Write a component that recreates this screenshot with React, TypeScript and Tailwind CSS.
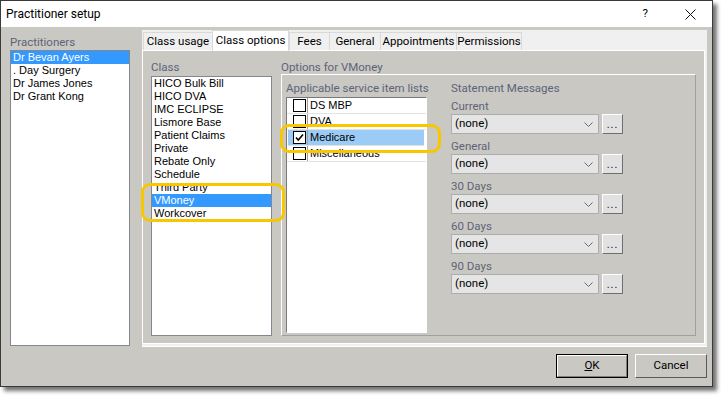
import React from 'react';

const practitioners = ['Dr Bevan Ayers', '. Day Surgery', 'Dr James Jones', 'Dr Grant Kong'];
const classes = [
  'HICO Bulk Bill', 'HICO DVA', 'IMC ECLIPSE', 'Lismore Base', 'Patient Claims', 'Private',
  'Rebate Only', 'Schedule', 'Third Party', 'VMoney', 'Workcover',
];
const serviceLists = [
  { name: 'DS MBP', checked: false },
  { name: 'DVA', checked: false },
  { name: 'Medicare', checked: true },
  { name: 'Miscellaneous', checked: false },
];
const messages = ['Current', 'General', '30 Days', '60 Days', '90 Days'];
const tabs = [
  { name: 'Class usage', w: 'w-[69px]' },
  { name: 'Class options', w: 'w-[77px]' },
  { name: 'Fees', w: 'w-[40px]' },
  { name: 'General', w: 'w-[51px]' },
  { name: 'Appointments', w: 'w-[76px]' },
  { name: 'Permissions', w: 'w-[66px]' },
];

const ui = "font-['Roboto',sans-serif] text-[11.5px] whitespace-nowrap";
const list = "font-['Liberation_Sans',Arial,sans-serif] text-[11px] leading-[13px] whitespace-nowrap";
const label = "font-['Roboto',sans-serif] text-[11.5px] text-[#5e6378] whitespace-nowrap";

function Combo() {
  return (
    <div className="flex">
      <div className="w-[148px] h-[20px] border border-[#adadad] bg-[#e5e5e5] flex items-center pl-[3px] pr-[4px]">
        <span className={`${ui} text-black flex-1`}>(none)</span>
        <svg width="9" height="5" viewBox="0 0 9 5" className="mr-[1px]">
          <polyline points="0.5,0.5 4.5,4.5 8.5,0.5" fill="none" stroke="#6a6a6a" strokeWidth="1" />
        </svg>
      </div>
      <div className="ml-[3px] w-[21px] h-[20px] bg-[#e1e1e1] border-t border-l border-white border-b border-r border-b-[#6f6f6f] border-r-[#6f6f6f] flex items-end justify-center pb-[4px]">
        <span className="font-['Liberation_Sans',sans-serif] text-[10px] leading-[8px] text-black tracking-[1px]">...</span>
      </div>
    </div>
  );
}

export default function App() {
  return (
    <div className="w-[721px] h-[395px] bg-white">
      <div className="relative w-[713px] h-[387px] border border-[#3a3a3a] bg-[#c9c8c3] shadow-[4px_4px_4px_rgba(0,0,0,0.55)] flex flex-col">
        {/* title bar */}
        <div className="h-[26px] bg-white flex items-center pl-[5px] shrink-0">
          <span className={`${ui} text-[12px] text-black flex-1`}>Practitioner setup</span>
          <span className={`${ui} text-black mr-[37px]`}>?</span>
          <svg width="11" height="11" viewBox="0 0 11 11" className="mr-[16px]">
            <line x1="0.5" y1="0.5" x2="10.5" y2="10.5" stroke="#111" strokeWidth="1" />
            <line x1="10.5" y1="0.5" x2="0.5" y2="10.5" stroke="#111" strokeWidth="1" />
          </svg>
        </div>

        <div className="flex">
          {/* practitioners */}
          <div className="ml-[9px] w-[120px] pt-[7px]">
            <div className={`${label} h-[16px] leading-[17px]`}>Practitioners</div>
            <div className="h-[296px] border border-[#828790] bg-white">
              {practitioners.map((p, i) => (
                <div
                  key={p}
                  className={`${list} h-[13px] pl-[2px] ${i === 0 ? 'bg-[#3399ff] text-white' : 'text-black'}`}
                >
                  {p}
                </div>
              ))}
            </div>
          </div>

          {/* tab control */}
          <div className="ml-[12px] mt-[3px] w-[565px] bg-[#f0f0f0] pr-[2px] pb-[2px] border-b border-white">
            <div className="flex h-[20px] items-end pl-[1px]">
              {tabs.map((t, i) =>
                i === 1 ? (
                  <div
                    key={t.name}
                    className={`${t.w} relative z-10 h-[21px] -mb-px bg-white border-t border-l border-r border-[#d9d9d9] flex items-center justify-center pb-[1px] ${ui} text-black`}
                  >
                    {t.name}
                  </div>
                ) : (
                  <div
                    key={t.name}
                    className={`${t.w} h-[18px] border-t border-[#d9d9d9] ${i === 0 ? 'border-l' : ''} ${i === tabs.length - 1 ? 'border-r' : ''} ${i > 1 ? 'border-l' : ''} flex items-center justify-center ${ui} text-black`}
                  >
                    {t.name}
                  </div>
                )
              )}
            </div>

            <div className="h-[294px] border border-white bg-[#c9c8c3] flex pl-[8px] pt-[8px]">
              {/* class list */}
              <div className="w-[121px]">
                <div className={`${label} h-[17px] leading-[17px]`}>Class</div>
                <div className="h-[260px] border border-[#828790] bg-white">
                  {classes.map(c => (
                    <div
                      key={c}
                      className={`${list} h-[13px] pl-[2px] ${c === 'VMoney' ? 'bg-[#3399ff] text-white' : 'text-black'}`}
                    >
                      {c}
                    </div>
                  ))}
                </div>
              </div>

              {/* options */}
              <div className="ml-[9px] w-[415px]">
                <div className={`${label} h-[15px] leading-[17px]`}>Options for VMoney</div>
                <div className="h-[262px] border-t border-l border-white border-b border-r border-b-[#a0a0a0] border-r-[#a0a0a0] flex pl-[4px] pt-[6px]">
                  <div className="w-[141px]">
                    <div className={`${label} h-[16px] leading-[15px]`}>Applicable service item lists</div>
                    <div className="h-[236px] bg-white border-t border-l border-[#7a7a7a] border-b border-r border-b-white border-r-white">
                      {serviceLists.map(s => (
                        <div
                          key={s.name}
                          className={`h-[16px] flex border-b border-[#e3e3e3] ${s.checked ? 'bg-[#9ccbf5] mr-[2px] ml-[1px]' : ''}`}
                        >
                          <div className={`${s.checked ? 'w-[20px]' : 'w-[21px]'} border-r border-[#a0a0a0] flex items-center`}>
                            <div className={`${s.checked ? 'ml-[5px]' : 'ml-[6px]'} w-[13px] h-[13px] border border-black bg-white flex items-center justify-center`}>
                              {s.checked && (
                                <svg width="9" height="9" viewBox="0 0 9 9">
                                  <polyline points="1,4.5 3.3,7 8,1.5" fill="none" stroke="#000" strokeWidth="1.6" />
                                </svg>
                              )}
                            </div>
                          </div>
                          <div className={`${list} leading-[15px] pl-[2px] text-black`}>{s.name}</div>
                        </div>
                      ))}
                    </div>
                  </div>

                  <div className="ml-[24px] w-[172px]">
                    <div className={`${label} h-[16px] leading-[15px]`}>Statement Messages</div>
                    <div className="flex flex-col gap-[3px]">
                      {messages.map(m => (
                        <div key={m}>
                          <div className={`${label} h-[17px] leading-[18px]`}>{m}</div>
                          <Combo />
                        </div>
                      ))}
                    </div>
                  </div>
                </div>
              </div>
            </div>
          </div>
        </div>

        {/* buttons */}
        <div className="flex justify-end mt-[7px] pr-[5px] gap-[7px]">
          <div className="w-[72px] h-[24px] border border-black bg-[#c9c8c3] flex">
            <div className="flex-1 border-t border-l border-white border-b border-r border-b-[#808080] border-r-[#808080] flex items-center justify-center">
              <span className={`${ui} text-black`}><span className="underline">O</span>K</span>
            </div>
          </div>
          <div className="w-[72px] h-[24px] border-t border-l border-white border-b border-r border-b-[#5a5a5a] border-r-[#5a5a5a] bg-[#c9c8c3] flex items-center justify-center">
            <span className={`${ui} text-black`}>Cancel</span>
          </div>
        </div>

        {/* annotation highlights */}
        <div className="absolute left-[140px] top-[182px] w-[144px] h-[39px] border-[3px] border-[#f8c700] rounded-[9px] pointer-events-none" />
        <div className="absolute left-[279px] top-[123px] w-[161px] h-[29px] border-[3px] border-[#f8c700] rounded-[9px] pointer-events-none" />
      </div>
    </div>
  );
}
